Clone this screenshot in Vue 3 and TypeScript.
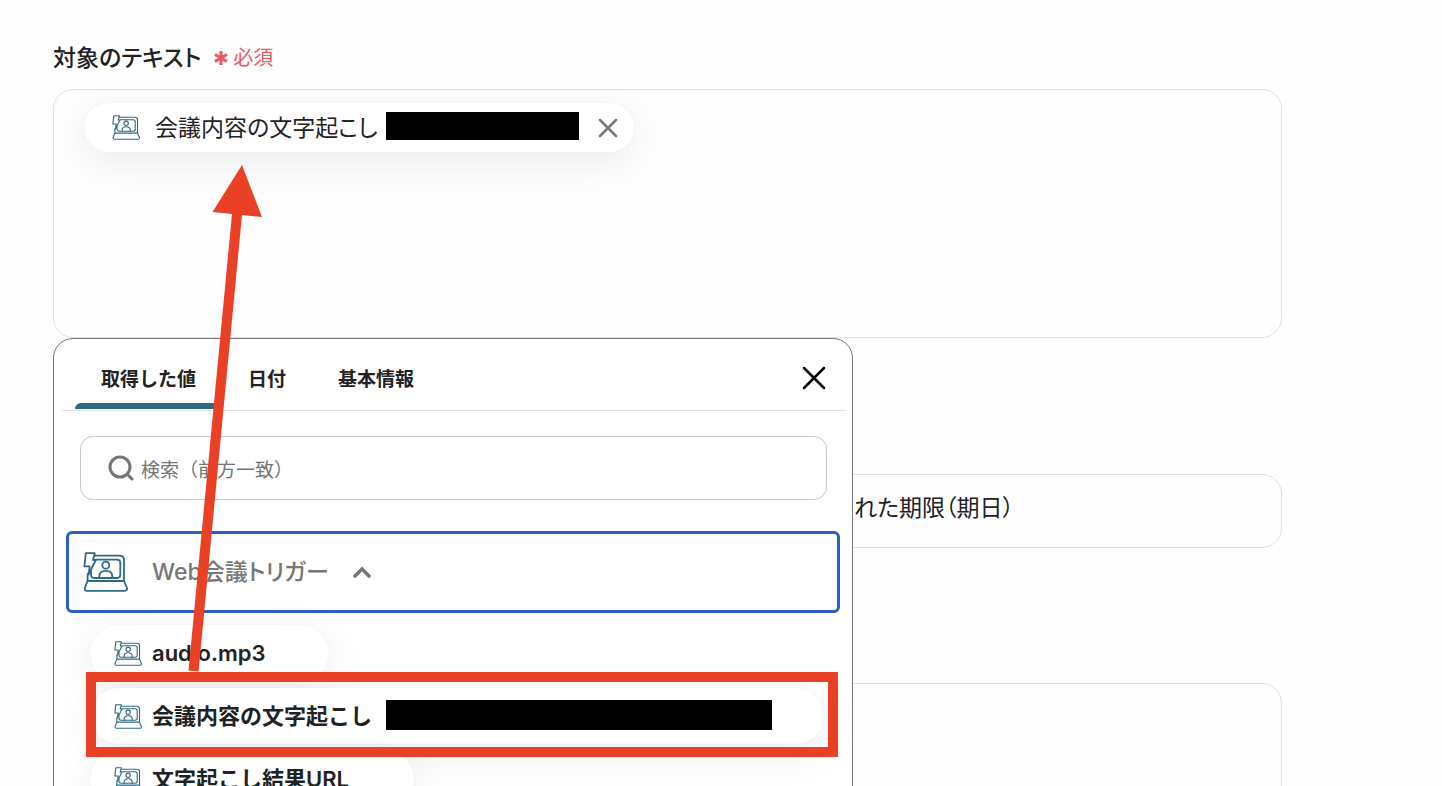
<script setup lang="ts">
import { h, ref } from 'vue'

const search = ref('')
const activeTab = ref('取得した値')
const tabs = ['取得した値', '日付', '基本情報']
const values = [
  { name: 'audio.mp3', kind: 'short', redacted: false },
  { name: '会議内容の文字起こし', kind: 'full', redacted: true },
  { name: '文字起こし結果URL', kind: 'medium', redacted: false },
]

const MeetingIcon = () =>
  h('svg', { viewBox: '0 0 45 40', fill: 'none', stroke: '#2f6a84', 'stroke-width': 1.8, 'stroke-linejoin': 'round', 'stroke-linecap': 'round', 'aria-hidden': 'true' }, [
    h('path', { d: 'M2.8 1.2H11.8L10 8H12.8L5.6 22.6L6.7 14.4H1.4Z' }),
    h('path', { d: 'M12 3.6H36.5Q41 3.6 41 8V29' }),
    h('path', { d: 'M4.6 22V29' }),
    h('path', { d: 'M13 7.6H34Q37.3 7.6 37.3 11V22.5Q37.3 26 34 26H11.5Q8 26 8 22.5V19' }),
    h('circle', { cx: 22.8, cy: 13.2, r: 3.5 }),
    h('path', { d: 'M16.3 26V24Q16.5 18.8 22.8 18.8Q29.1 18.8 29.3 24V26' }),
    h('path', { d: 'M4.6 29H41L44 36Q44.4 38.8 42 38.8H4Q1.2 38.8 1.8 36Z' }),
  ])
</script>

<template>
  <main class="page">
    <form class="form" @submit.prevent>
      <section class="field">
        <h2 class="label">対象のテキスト <span class="required"><svg class="star" viewBox="0 0 16 16" aria-hidden="true"><path d="M8 1V15M2 4.5L14 11.5M14 4.5L2 11.5" /></svg>必須</span></h2>
        <div class="box box-large">
          <div class="chip">
            <MeetingIcon class="icon" />
            <span>会議内容の文字起こし</span>
            <span class="redaction"></span>
            <button class="remove" type="button" aria-label="削除">
              <svg viewBox="0 0 20 20" aria-hidden="true"><path d="M2 2L18 18M18 2L2 18" /></svg>
            </button>
          </div>
        </div>
      </section>
      <div class="box box-row">れた期限（期日）</div>
      <div class="box box-large"></div>
    </form>

    <section class="picker">
      <header class="tabs">
        <nav class="tab-list">
          <button v-for="tab in tabs" :key="tab" type="button" class="tab" :class="{ active: tab === activeTab }" @click="activeTab = tab">{{ tab }}</button>
        </nav>
        <button class="close" type="button" aria-label="閉じる">
          <svg viewBox="0 0 24 24" aria-hidden="true"><path d="M2 2L22 22M22 2L2 22" /></svg>
        </button>
      </header>
      <label class="search">
        <svg viewBox="0 0 26 26" aria-hidden="true"><circle cx="12" cy="12" r="10" /><path d="M19 19L24 24" /></svg>
        <input v-model="search" type="text" placeholder="検索（前方一致）" aria-label="検索" />
      </label>
      <button class="group" type="button" aria-expanded="true">
        <MeetingIcon class="icon-large" />
        <span>Web会議トリガー</span>
        <svg class="chevron" viewBox="0 0 18 12" aria-hidden="true"><path d="M2 10L9 3L16 10" /></svg>
      </button>
      <div class="values">
        <button v-for="value in values" :key="value.name" type="button" class="value" :class="value.kind">
          <MeetingIcon class="icon" />
          <span>{{ value.name }}</span>
          <span v-if="value.redacted" class="redaction wide"></span>
        </button>
        <div class="highlight"></div>
      </div>
    </section>

    <svg class="arrow" viewBox="0 0 50 507" aria-hidden="true"><path d="M30 0L50 52L30 50L-13.5 506.5L-23.5 505.5L20 49L0.5 47Z" /></svg>
  </main>
</template>

<style>
body {
  background: #fefefe;
}
</style>

<style scoped>
* {
  box-sizing: border-box;
}
.page {
  position: relative;
  height: 100vh;
  overflow: hidden;
  padding: 40px 160px 0 53px;
  color: #222;
  font-family: Inter, "Noto Sans CJK JP", sans-serif;
  font-size: 22px;
  line-height: 32px;
}
button {
  padding: 0;
  border: 0;
  background: none;
  color: inherit;
  font: inherit;
  cursor: pointer;
}
.label,
.chip,
.box-row,
.group {
  font-size: 23px;
  font-feature-settings: "palt";
}
.form {
  display: flex;
  flex-direction: column;
}
.label {
  display: flex;
  align-items: center;
  gap: 12px;
  height: 36px;
  margin: 0 0 13px;
  font-weight: 500;
}
.required {
  display: flex;
  align-items: center;
  gap: 4px;
  color: #ed5a64;
  font-size: 20px;
  font-weight: 400;
}
.star {
  width: 16px;
  height: 16px;
  fill: none;
  stroke: currentColor;
  stroke-width: 3;
}
.box {
  border: 1px solid #e0e0e2;
  border-radius: 20px;
}
.box-large {
  height: 249px;
  padding: 13px 30px;
}
.box-row {
  height: 74px;
  margin: 136px 0 135px;
  padding: 0 0 7px 800px;
  line-height: 66px;
  white-space: nowrap;
}
.chip,
.value {
  display: flex;
  align-items: center;
  background: #fff;
  white-space: nowrap;
  box-shadow: 0 10px 40px rgb(0 0 0 / 8%), 0 0 2px rgb(0 0 0 / 6%);
}
.chip {
  width: 550px;
  height: 49px;
  padding-left: 28px;
  border-radius: 25px;
}
.icon {
  flex: none;
  width: 28px;
  height: 25px;
}
.chip .icon {
  margin-right: 15px;
}
.redaction {
  width: 193px;
  height: 28px;
  margin: 0 19px 4px auto;
  background: #000;
}
.remove {
  height: 20px;
  margin-right: 16px;
}
.remove svg {
  display: block;
  width: 20px;
  height: 20px;
  fill: none;
  stroke: #777;
  stroke-width: 2.5;
  stroke-linecap: round;
}
.picker {
  position: absolute;
  top: 338px;
  left: 53px;
  width: 800px;
  height: 600px;
  border: 1px solid #777;
  border-radius: 20px;
  background: #fff;
}
.tabs {
  display: flex;
  justify-content: space-between;
  align-items: center;
  height: 72px;
  margin: 0 6px 0 8px;
  padding: 0 20px 0 13px;
  border-bottom: 1px solid #e2e2e2;
}
.tab-list {
  display: flex;
  height: 100%;
}
.tab {
  position: relative;
  padding: 10px 26px 0;
  font-size: 19px;
  font-weight: 600;
}
.active::after {
  content: "";
  position: absolute;
  right: 0;
  bottom: 1px;
  left: 0;
  height: 6px;
  border-radius: 6px 6px 0 0;
  background: #2f6a84;
}
.close {
  margin-top: 6px;
}
.close svg {
  display: block;
  width: 24px;
  height: 24px;
  fill: none;
  stroke: #000;
  stroke-width: 2.5;
  stroke-linecap: round;
}
.search {
  display: flex;
  align-items: center;
  gap: 7px;
  height: 64px;
  margin: 25px 25px 31px 26px;
  padding: 0 27px;
  border: 1px solid #c8c8c8;
  border-radius: 13px;
}
.search svg {
  width: 26px;
  height: 26px;
  fill: none;
  stroke: #757575;
  stroke-width: 3;
  stroke-linecap: round;
}
.search input {
  flex: 1;
  height: 36px;
  padding: 4px 0 0;
  border: 0;
  outline: 0;
  background: none;
  font: inherit;
  font-size: 19px;
}
.search input::placeholder {
  color: #757575;
  opacity: 1;
}
.group {
  display: flex;
  align-items: center;
  width: 774px;
  height: 82px;
  margin-left: 12px;
  padding-left: 14px;
  border: 3px solid #2b60c8;
  border-radius: 6px;
  color: #777;
  font-weight: 500;
}
.icon-large {
  width: 45px;
  height: 40px;
  margin-right: 24px;
}
.chevron {
  width: 18px;
  height: 12px;
  margin-left: 24px;
  fill: none;
  stroke: #757575;
  stroke-width: 3.5;
  stroke-linecap: round;
}
.values {
  position: relative;
  display: flex;
  flex-direction: column;
  align-items: flex-start;
  gap: 7px;
  padding: 12px 28px 0 36px;
}
.value {
  height: 56px;
  padding-left: 24px;
  border-radius: 28px;
  font-weight: 600;
}
.value .icon {
  margin-right: 10px;
}
.short {
  width: 239px;
}
.full {
  width: 100%;
}
.medium {
  width: 324px;
}
.wide {
  width: 386px;
  height: 30px;
  margin: 0 52px 2px auto;
}
.highlight {
  position: absolute;
  top: 59px;
  left: 32px;
  width: 752px;
  height: 85px;
  border: 10px solid #ea4025;
}
.arrow {
  position: absolute;
  top: 165px;
  left: 212px;
  width: 50px;
  height: 507px;
  overflow: visible;
  fill: #ea4025;
}
</style>
